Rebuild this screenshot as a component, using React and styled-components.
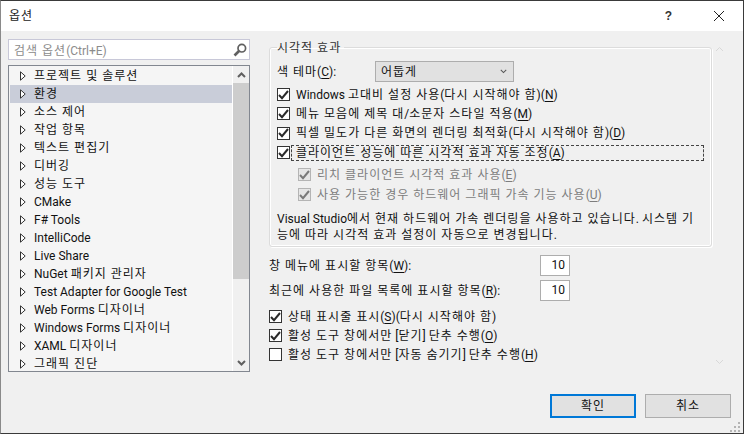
import React from "react";
import styled, { createGlobalStyle } from "styled-components";

const GlobalStyle = createGlobalStyle`
  html, body {
    margin: 0;
    padding: 0;
    background: #f0f0f0;
  }
  * {
    box-sizing: border-box;
  }
`;

const treeItems = [
  "프로젝트 및 솔루션",
  "환경",
  "소스 제어",
  "작업 항목",
  "텍스트 편집기",
  "디버깅",
  "성능 도구",
  "CMake",
  "F# Tools",
  "IntelliCode",
  "Live Share",
  "NuGet 패키지 관리자",
  "Test Adapter for Google Test",
  "Web Forms 디자이너",
  "Windows Forms 디자이너",
  "XAML 디자이너",
  "그래픽 진단",
];

// hangul runs are set wider than the latin text around them
function K({ children }) {
  return React.Children.map(children, (child) => {
    if (typeof child !== "string") return child;
    return child.split(/([가-힣]+(?: [가-힣]+)*)/).map((part, i) =>
      i % 2 ? <Hangul key={i}>{part}</Hangul> : part
    );
  });
}

function Arrow() {
  return (
    <svg width="6" height="10" viewBox="0 0 6 10">
      <path d="M0.5 0.8 L5.2 5 L0.5 9.2 Z" fill="#fff" stroke="#333" strokeWidth="1" />
    </svg>
  );
}

function Chevron({ up, color = "#606060", width = 2, size = 9 }) {
  return (
    <svg width={size} height={(size * 2) / 3} viewBox="0 0 9 6">
      <path
        d={up ? "M1 5 L4.5 1.5 L8 5" : "M1 1 L4.5 4.5 L8 1"}
        fill="none"
        stroke={color}
        strokeWidth={width}
      />
    </svg>
  );
}

function CheckBox({ checked = true, disabled }) {
  return (
    <Box $disabled={disabled}>
      {checked && (
        <svg width="11" height="10" viewBox="0 0 11 10">
          <path
            d="M1 5 L4 8.2 L10 1"
            fill="none"
            stroke={disabled ? "#7a7a7a" : "#2a2a2a"}
            strokeWidth="2"
          />
        </svg>
      )}
    </Box>
  );
}

function Option({ children, checked, disabled, focused, sub, gap = 6 }) {
  return (
    <OptionRow $sub={sub} $gap={gap}>
      <CheckBox checked={checked} disabled={disabled} />
      <OptionText $disabled={disabled} $focused={focused}>
        <K>{children}</K>
      </OptionText>
    </OptionRow>
  );
}

export default function App() {
  return (
    <Window>
      <GlobalStyle />
      <TitleBar>
        <Title>
          <K>옵션</K>
        </Title>
        <TitleButtons>
          <Help>?</Help>
          <svg width="12" height="12" viewBox="0 0 12 12">
            <path d="M1 1 L11 11 M11 1 L1 11" stroke="#222" strokeWidth="1" fill="none" />
          </svg>
        </TitleButtons>
      </TitleBar>

      <Body>
        <LeftColumn>
          <SearchBox>
            <SearchHint>
              <K>검색 옵션(Ctrl+E)</K>
            </SearchHint>
            <svg width="14" height="14" viewBox="0 0 14 14">
              <circle cx="8.8" cy="5.2" r="3.8" fill="none" stroke="#606060" strokeWidth="1.7" />
              <path d="M6 8 L1.5 12.5" stroke="#606060" strokeWidth="2.6" fill="none" />
            </svg>
          </SearchBox>
          <TreeBox>
            <TreeList>
              {treeItems.map((item, i) => (
                <TreeRow key={item} $selected={i === 1}>
                  <Arrow />
                  <span>
                    <K>{item}</K>
                  </span>
                </TreeRow>
              ))}
            </TreeList>
            <ScrollBar>
              <ScrollButton>
                <Chevron up />
              </ScrollButton>
              <ScrollTrack>
                <ScrollThumb />
              </ScrollTrack>
              <ScrollButton>
                <Chevron />
              </ScrollButton>
            </ScrollBar>
          </TreeBox>
        </LeftColumn>

        <RightColumn>
          <GroupBox>
            <GroupTitle>
              <K>시각적 효과</K>
            </GroupTitle>
            <ThemeRow>
              <ThemeLabel>
                <K>색 테마(</K>
                <u>C</u>):
              </ThemeLabel>
              <Combo>
                <span>
                  <K>어둡게</K>
                </span>
                <Chevron color="#555" width={1.3} size={7} />
              </Combo>
            </ThemeRow>
            <OptionStack>
              <Option>
                Windows 고대비 설정 사용(다시 시작해야 함)(<u>N</u>)
              </Option>
              <Option>
                메뉴 모음에 제목 대/소문자 스타일 적용(<u>M</u>)
              </Option>
              <Option>
                픽셀 밀도가 다른 화면의 렌더링 최적화(다시 시작해야 함)(<u>D</u>)
              </Option>
              <Option focused gap={1}>
                클라이언트 성능에 따른 시각적 효과 자동 조정(<u>A</u>)
              </Option>
            </OptionStack>
            <SubStack>
              <Option disabled sub>
                리치 클라이언트 시각적 효과 사용(<u>E</u>)
              </Option>
              <Option disabled sub>
                사용 가능한 경우 하드웨어 그래픽 가속 기능 사용(<u>U</u>)
              </Option>
            </SubStack>
            <Note>
              <K>Visual Studio에서 현재 하드웨어 가속 렌더링을 사용하고 있습니다. 시스템 기</K>
              <br />
              <K>능에 따라 시각적 효과 설정이 자동으로 변경됩니다.</K>
            </Note>
          </GroupBox>

          <CountStack>
            <CountRow>
              <span>
                <K>창 메뉴에 표시할 항목(</K>
                <u>W</u>):
              </span>
              <NumberBox>10</NumberBox>
            </CountRow>
            <CountRow>
              <span>
                <K>최근에 사용한 파일 목록에 표시할 항목(</K>
                <u>R</u>):
              </span>
              <NumberBox>10</NumberBox>
            </CountRow>
          </CountStack>

          <BottomOptions>
            <Option>
              상태 표시줄 표시(<u>S</u>)(다시 시작해야 함)
            </Option>
            <Option>
              활성 도구 창에서만 [닫기] 단추 수행(<u>O</u>)
            </Option>
            <Option checked={false}>
              활성 도구 창에서만 [자동 숨기기] 단추 수행(<u>H</u>)
            </Option>
          </BottomOptions>
        </RightColumn>

        <PanelScroll>
          <Chevron up color="#d8d8d8" width={1} />
          <Chevron color="#d8d8d8" width={1} />
        </PanelScroll>
      </Body>

      <Footer>
        <DialogButton $primary>
          <K>확인</K>
        </DialogButton>
        <DialogButton>
          <K>취소</K>
        </DialogButton>
      </Footer>
      <Grip>
        <svg width="11" height="11" viewBox="0 0 11 11" fill="#b4b4b4">
          <rect x="8" y="0" width="2" height="2" />
          <rect x="4" y="4" width="2" height="2" />
          <rect x="8" y="4" width="2" height="2" />
          <rect x="0" y="8" width="2" height="2" />
          <rect x="4" y="8" width="2" height="2" />
          <rect x="8" y="8" width="2" height="2" />
        </svg>
      </Grip>
    </Window>
  );
}

const Hangul = styled.span`
  letter-spacing: 1px;
`;

const Window = styled.div`
  position: relative;
  width: 744px;
  height: 434px;
  display: flex;
  flex-direction: column;
  overflow: hidden;
  background: #f0f0f0;
  border: 1px solid #3a3a3a;
  border-left-color: #8a8a8a;
  color: #111;
  font-family: Roboto, "Noto Sans CJK KR", sans-serif;
  font-size: 12px;
  line-height: 16px;
  u {
    text-underline-offset: 2px;
  }
`;

const TitleBar = styled.div`
  height: 30px;
  flex: none;
  display: flex;
  align-items: center;
  justify-content: space-between;
  padding: 0 18px 0 8px;
  background: #fff;
`;

const Title = styled.div`
  font-size: 12px;
  color: #222;
`;

const TitleButtons = styled.div`
  display: flex;
  align-items: center;
  gap: 41px;
`;

const Help = styled.span`
  font-family: "Liberation Sans", sans-serif;
  font-size: 12px;
  font-weight: 700;
  color: #333;
`;

const Body = styled.div`
  position: relative;
  flex: 1;
  display: flex;
  min-height: 0;
`;

const LeftColumn = styled.div`
  width: 242px;
  margin: 8px 0 0 7px;
  flex: none;
  display: flex;
  flex-direction: column;
  gap: 5px;
`;

const SearchBox = styled.div`
  height: 21px;
  display: flex;
  align-items: center;
  justify-content: space-between;
  padding: 0 2px 0 5px;
  background: #fff;
  border: 1px solid #c8c8d8;
`;

const SearchHint = styled.span`
  padding-top: 2px;
  color: #8c8c8c;
`;

const TreeBox = styled.div`
  height: 307px;
  display: flex;
  background: #f5f5f5;
  border: 1px solid #828790;
`;

const TreeList = styled.div`
  flex: 1;
  padding: 1px 0 0 1px;
  overflow: hidden;
`;

const TreeRow = styled.div`
  height: 18px;
  display: flex;
  align-items: center;
  gap: 8px;
  padding-left: 10px;
  background: ${(p) => (p.$selected ? "#c9cdd9" : "transparent")};
`;

const ScrollBar = styled.div`
  width: 17px;
  flex: none;
  display: flex;
  flex-direction: column;
  border-left: 1px solid #fff;
  background: #f0f0f0;
`;

const ScrollButton = styled.div`
  height: 17px;
  flex: none;
  display: flex;
  align-items: center;
  justify-content: center;
`;

const ScrollTrack = styled.div`
  flex: 1;
  background: #f0f0f0;
`;

const ScrollThumb = styled.div`
  height: 196px;
  background: #cdcdcd;
`;

const RightColumn = styled.div`
  width: 443px;
  margin: 8px 0 0 19px;
  flex: none;
  display: flex;
  flex-direction: column;
`;

const GroupBox = styled.fieldset`
  margin: 0;
  padding: 0 7px 0 7px;
  height: 208px;
  min-width: 0;
  border: 1px solid #dcdcdc;
  border-radius: 3px;
  box-shadow: inset 0 0 0 1px #fff, 1px 1px 0 #fff;
`;

const GroupTitle = styled.legend`
  position: relative;
  top: 1px;
  padding: 0 3px 0 0;
  margin-left: 0;
  line-height: 16px;
  color: #333;
`;

const ThemeRow = styled.div`
  display: flex;
  align-items: center;
  height: 21px;
  margin-top: 6px;
`;

const ThemeLabel = styled.span`
  width: 98px;
`;

const Combo = styled.div`
  width: 139px;
  height: 21px;
  display: flex;
  align-items: center;
  justify-content: space-between;
  padding: 0 6px 0 5px;
  background: #e1e1e1;
  border: 1px solid #adadad;
`;

const OptionStack = styled.div`
  display: flex;
  flex-direction: column;
  gap: 6.4px;
  margin-top: 6px;
`;

const SubStack = styled.div`
  display: flex;
  flex-direction: column;
  gap: 7px;
  margin-top: 9px;
`;

const OptionRow = styled.div`
  display: flex;
  align-items: center;
  gap: ${(p) => p.$gap}px;
  height: 13px;
  padding-left: ${(p) => (p.$sub ? "21px" : "0")};
`;

const Box = styled.div`
  width: 13px;
  height: 13px;
  flex: none;
  display: flex;
  align-items: center;
  justify-content: center;
  background: ${(p) => (p.$disabled ? "#e6e6e6" : "#fff")};
  border: 1px solid ${(p) => (p.$disabled ? "#b4b4b4" : "#333")};
`;

const OptionText = styled.span`
  flex: ${(p) => (p.$focused ? "1" : "none")};
  color: ${(p) => (p.$disabled ? "#7d7d7d" : "inherit")};
  height: ${(p) => (p.$focused ? "16px" : "auto")};
  padding-left: ${(p) => (p.$focused ? "5px" : "0")};
  outline: ${(p) => (p.$focused ? "1px dashed #444" : "none")};
  outline-offset: -1px;
  white-space: nowrap;
`;

const Note = styled.p`
  margin: 10px 0 0;
  line-height: 16px;
  color: #111;
  white-space: nowrap;
`;

const CountStack = styled.div`
  display: flex;
  flex-direction: column;
  gap: 4px;
  margin-top: 8px;
`;

const CountRow = styled.div`
  display: flex;
  align-items: center;
  justify-content: space-between;
  width: 301px;
  height: 21px;
`;

const NumberBox = styled.div`
  width: 30px;
  height: 21px;
  padding-right: 4px;
  text-align: right;
  line-height: 19px;
  background: #fff;
  border: 1px solid #adadad;
`;

const BottomOptions = styled.div`
  display: flex;
  flex-direction: column;
  gap: 6px;
  margin-top: 9px;
`;

const PanelScroll = styled.div`
  position: absolute;
  right: 19px;
  top: 15px;
  height: 319px;
  display: flex;
  flex-direction: column;
  justify-content: space-between;
`;

const Footer = styled.div`
  height: 39px;
  flex: none;
  display: flex;
  gap: 9px;
  padding: 0 12px 0 549px;
`;

const DialogButton = styled.button`
  width: 86px;
  height: 24px;
  padding: 0;
  font: inherit;
  color: #111;
  background: #e1e1e1;
  border: ${(p) => (p.$primary ? "2px solid #0078d7" : "1px solid #adadad")};
`;

const Grip = styled.div`
  position: absolute;
  right: 2px;
  bottom: 0;
  line-height: 0;
`;
